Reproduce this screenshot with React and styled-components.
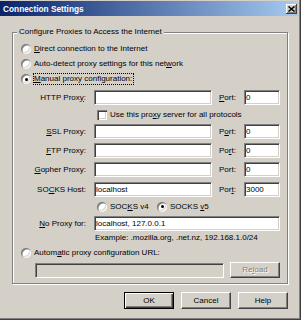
import React from "react";
import styled, { createGlobalStyle, css } from "styled-components";

const Global = createGlobalStyle`
  html, body { margin: 0; padding: 0; background: #d4d0c8; }
  body { font-family: "Liberation Sans", Arial, sans-serif; font-size: 8px; color: #000; }
  * { box-sizing: border-box; }
`;

const Window = styled.div`
  width: 301px;
  height: 320px;
  background: #d4d0c8;
  padding: 1px 3px 0 0;
  box-shadow: inset -1px -1px 0 #404040, inset -2px -2px 0 #808080;
  display: flex;
  flex-direction: column;
  font-family: "Liberation Sans", Arial, sans-serif;
  font-size: 8px;
  line-height: 10px;
`;

const TitleBar = styled.div`
  height: 15px;
  display: flex;
  align-items: center;
  padding: 0 1px 0 3px;
  background: linear-gradient(to right, #0a246a, #a6caf0);
  color: #fff;
  font-weight: bold;
  font-size: 8.3px;
`;

const CloseButton = styled.div`
  margin-left: auto;
  width: 11px;
  height: 10px;
  background: #d4d0c8;
  box-shadow: inset -1px -1px 0 #404040, inset 1px 1px 0 #fff, inset -2px -2px 0 #808080;
  display: flex;
  align-items: center;
  justify-content: center;
`;

const GroupBox = styled.div`
  position: relative;
  margin: 16px 0 0 12px;
  width: 276px;
  border: 1px solid #808080;
  box-shadow: inset 1px 1px 0 #fff, 1px 1px 0 #fff;
  padding: 8px 0 5px 0;
`;

const Legend = styled.span`
  position: absolute;
  top: -6px;
  left: 4px;
  padding: 0 2px;
  background: #d4d0c8;
  line-height: 10px;
  white-space: nowrap;
`;

const Row = styled.div`
  display: flex;
  align-items: center;
  height: ${(p) => p.$h}px;
  margin-top: ${(p) => p.$mt || 0}px;
  padding-left: ${(p) => p.$pl || 0}px;
  white-space: nowrap;
`;

const RadioCircle = styled.span`
  flex: none;
  position: relative;
  width: 10px;
  height: 10px;
  border-radius: 50%;
  background: #fff;
  box-shadow: inset 1px 1px 0 #808080, inset 1.5px 1.5px 0 #909090,
    inset -1px -1px 0 #f4f4f4, inset -2px -2px 0 #dcd9d2;
  ${(p) =>
    p.$checked &&
    css`
      &::after {
        content: "";
        position: absolute;
        left: 3.5px;
        top: 3.5px;
        width: 3px;
        height: 3px;
        border-radius: 50%;
        background: #000;
      }
    `}
`;

const OptLabel = styled.span`
  margin-left: 2px;
  border: 1px dotted ${(p) => (p.$focus ? "#000" : "transparent")};
  padding: 0 1px 0 0;
  line-height: 10px;
`;

const RadioOption = styled.div`
  display: flex;
  align-items: center;
  margin-left: ${(p) => p.$ml || 0}px;
  width: ${(p) => (p.$w ? `${p.$w}px` : "auto")};
`;

const CheckBox = styled.span`
  flex: none;
  width: 10px;
  height: 10px;
  margin-left: ${(p) => p.$ml || 0}px;
  background: #fff;
  box-shadow: inset 1px 1px 0 #808080, inset 2px 2px 0 #404040,
    inset -1px -1px 0 #fff, inset -2px -2px 0 #d4d0c8;
`;

const CheckText = styled.span`
  margin-left: 3px;
`;

const FieldLabel = styled.span`
  flex: none;
  width: ${(p) => p.$w}px;
  margin-left: ${(p) => p.$ml || 0}px;
  text-align: ${(p) => p.$align || "right"};
  padding-right: ${(p) => (p.$align === "left" ? 0 : 1)}px;
`;

const Field = styled.input`
  flex: none;
  width: ${(p) => p.$w}px;
  height: 15px;
  margin: 0 0 0 ${(p) => p.$ml || 0}px;
  padding: 0 1px;
  font: inherit;
  color: #000;
  background: ${(p) => (p.disabled ? "#d4d0c8" : "#fff")};
  border: 1px solid;
  border-color: #808080 #fff #fff #808080;
  box-shadow: inset 1px 1px 0 #404040, inset -1px -1px 0 #d4d0c8;
  outline: none;
`;

const Hint = styled.span``;

const Button = styled.button`
  flex: none;
  width: 50px;
  height: ${(p) => p.$h || 17}px;
  margin: 0 0 0 ${(p) => p.$ml || 0}px;
  padding: 0;
  font: inherit;
  color: #000;
  background: #d4d0c8;
  border: 1px solid;
  border-color: #fff #404040 #404040 #fff;
  box-shadow: inset -1px -1px 0 #808080, inset 1px 1px 0 #d4d0c8;
  ${(p) =>
    p.$default &&
    css`
      border-color: #000;
      box-shadow: inset 1px 1px 0 #fff, inset -1px -1px 0 #404040,
        inset -2px -2px 0 #808080;
    `}
  &:disabled {
    color: #808080;
    text-shadow: 1px 1px 0 #fff;
  }
`;

const ButtonRow = styled.div`
  display: flex;
  justify-content: flex-end;
  gap: 7px;
  margin-top: 8px;
  padding-right: 10px;
`;

function Radio({ checked, focus, children, ml, w }) {
  return (
    <RadioOption $ml={ml} $w={w}>
      <RadioCircle $checked={checked} />
      <OptLabel $focus={focus}>{children}</OptLabel>
    </RadioOption>
  );
}

function ProxyRow({ label, value, port, portLabel, mt }) {
  return (
    <Row $h={19} $mt={mt}>
      <FieldLabel $w={74}>{label}</FieldLabel>
      <Field $w={118} $ml={7} readOnly defaultValue={value} />
      <FieldLabel $w={25} $ml={7} $align="left">
        {portLabel}
      </FieldLabel>
      <Field $w={36} readOnly defaultValue={port} />
    </Row>
  );
}

export default function App() {
  return (
    <>
      <Global />
      <Window>
        <TitleBar>
          Connection Settings
          <CloseButton>
            <svg width="7" height="6" viewBox="0 0 7 6">
              <path d="M0.5 0.5 L6.5 5.5 M6.5 0.5 L0.5 5.5" stroke="#000" strokeWidth="1.5" />
            </svg>
          </CloseButton>
        </TitleBar>
        <GroupBox>
          <Legend>Configure Proxies to Access the Internet</Legend>
          <Row $h={15}>
            <Radio ml={8}>
              <u>D</u>irect connection to the Internet
            </Radio>
          </Row>
          <Row $h={15}>
            <Radio ml={8}>
              Auto-detect proxy settings for this net<u>w</u>ork
            </Radio>
          </Row>
          <Row $h={16}>
            <Radio ml={8} checked focus>
              <u>M</u>anual proxy configuration:
            </Radio>
          </Row>
          <ProxyRow
            mt={1}
            label={<>HTTP Prox<u>y</u>:</>}
            portLabel={<><u>P</u>ort:</>}
            value=""
            port="0"
          />
          <Row $h={15}>
            <CheckBox $ml={84} />
            <CheckText>
              Use this pro<u>x</u>y server for all protocols
            </CheckText>
          </Row>
          <ProxyRow
            label={<><u>S</u>SL Proxy:</>}
            portLabel={<>P<u>o</u>rt:</>}
            value=""
            port="0"
          />
          <ProxyRow
            label={<><u>F</u>TP Proxy:</>}
            portLabel={<>Po<u>r</u>t:</>}
            value=""
            port="0"
          />
          <ProxyRow
            label={<><u>G</u>opher Proxy:</>}
            portLabel={<>Port:</>}
            value=""
            port="0"
          />
          <ProxyRow
            mt={1}
            label={<>SO<u>C</u>KS Host:</>}
            portLabel={<>Por<u>t</u>:</>}
            value="localhost"
            port="3000"
          />
          <Row $h={15}>
            <Radio ml={84} w={60}>
              SOC<u>K</u>S v4
            </Radio>
            <Radio checked>
              SOCKS <u>v</u>5
            </Radio>
          </Row>
          <Row $h={19}>
            <FieldLabel $w={74}>
              <u>N</u>o Proxy for:
            </FieldLabel>
            <Field $w={186} $ml={7} readOnly defaultValue="localhost, 127.0.0.1" />
          </Row>
          <Row $h={10} $pl={82}>
            <Hint>Example: .mozilla.org, .net.nz, 192.168.1.0/24</Hint>
          </Row>
          <Row $h={14} $mt={3}>
            <Radio ml={8}>
              Autom<u>a</u>tic proxy configuration URL:
            </Radio>
          </Row>
          <Row $h={16} $mt={2}>
            <Field $w={189} $ml={22} disabled defaultValue="" />
            <Button $ml={6} $h={16} disabled>
              Re<u>l</u>oad
            </Button>
          </Row>
        </GroupBox>
        <ButtonRow>
          <Button $default>OK</Button>
          <Button>Cancel</Button>
          <Button>Help</Button>
        </ButtonRow>
      </Window>
    </>
  );
}
